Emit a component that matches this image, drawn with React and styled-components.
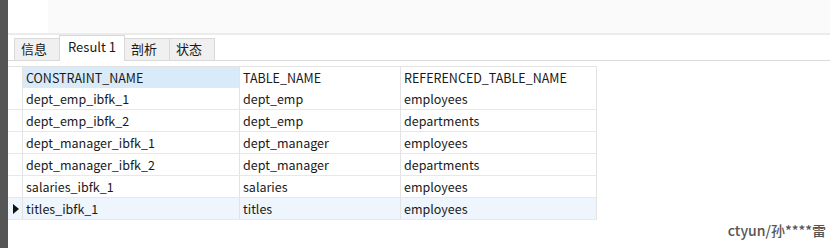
import React from 'react'
import styled, { createGlobalStyle } from 'styled-components'

const Global = createGlobalStyle`
  html, body { margin: 0; padding: 0; background: #fff; }
  body { font-family: "Noto Sans CJK SC", "Noto Sans", sans-serif; font-size: 12.5px; color: #1a1a1a; }
`

const columns = ['CONSTRAINT_NAME', 'TABLE_NAME', 'REFERENCED_TABLE_NAME']
const widths = [217, 161, 196]

const rows = [
  ['dept_emp_ibfk_1', 'dept_emp', 'employees'],
  ['dept_emp_ibfk_2', 'dept_emp', 'departments'],
  ['dept_manager_ibfk_1', 'dept_manager', 'employees'],
  ['dept_manager_ibfk_2', 'dept_manager', 'departments'],
  ['salaries_ibfk_1', 'salaries', 'employees'],
  ['titles_ibfk_1', 'titles', 'employees'],
]

const Page = styled.div`
  display: flex;
  width: 830px;
  height: 248px;
  overflow: hidden;
  position: relative;
`

const SideStrip = styled.div`
  width: 8px;
  background: #555;
  flex-shrink: 0;
`

const Main = styled.div`
  flex: 1;
  display: flex;
  flex-direction: column;
`

const TopArea = styled.div`
  height: 33px;
  display: flex;
  border-bottom: 2px solid #ebebeb;
`

const TopBlank = styled.div`
  width: 40px;
  background: #fff;
`

const TopFill = styled.div`
  flex: 1;
  background: #fafafa;
`

const TabBar = styled.div`
  height: 25px;
  display: flex;
  align-items: flex-end;
  padding-left: 6px;
  border-bottom: 1px solid #d9d9d9;
`

const Tab = styled.div`
  box-sizing: border-box;
  height: ${p => (p.$active ? 26 : 22)}px;
  min-width: ${p => (p.$active ? 61 : 46)}px;
  padding: 0 ${p => (p.$active ? 8 : 6)}px ${p => (p.$active ? 5 : 3)}px;
  margin-left: ${p => (p.$first ? 0 : -1)}px;
  margin-bottom: ${p => (p.$active ? '-1px' : '0')};
  display: flex;
  align-items: center;
  background: ${p => (p.$active ? '#fff' : '#f0f0f0')};
  border: 1px solid #d9d9d9;
  border-bottom: none;
  color: #1a1a1a;
  font-size: 13px;
  position: relative;
  z-index: ${p => (p.$active ? 1 : 0)};
`

const Grid = styled.div`
  margin-top: 5px;
  display: grid;
  grid-template-columns: 15px ${widths.map(w => w + 'px').join(' ')};
  grid-auto-rows: 22px;
  width: max-content;
`

const Cell = styled.div`
  box-sizing: border-box;
  padding-left: 3px;
  display: flex;
  align-items: center;
  white-space: nowrap;
  border-right: 1px solid #e3e3e3;
  border-bottom: 1px solid #e8e8e8;
  background: ${p => p.$bg || '#fff'};
`

const HeadCell = styled(Cell)`
  height: 23px;
  border-top: 1px solid #e3e3e3;
  border-bottom: 1px solid #dcdcdc;
`

const RowHead = styled(Cell)`
  padding-left: 2px;
  justify-content: center;
`

const Marker = styled.span`
  width: 0;
  height: 0;
  border-top: 5px solid transparent;
  border-bottom: 5px solid transparent;
  border-left: 6px solid #111;
`

const Watermark = styled.div`
  position: absolute;
  right: 4px;
  bottom: 8px;
  font-size: 14px;
  font-weight: 500;
  color: #555;
`

export default function App() {
  return (
    <Page>
      <Global />
      <SideStrip />
      <Main>
        <TopArea>
          <TopBlank />
          <TopFill />
        </TopArea>
        <TabBar>
          <Tab $first>信息</Tab>
          <Tab $active>Result 1</Tab>
          <Tab>剖析</Tab>
          <Tab>状态</Tab>
        </TabBar>
        <Grid>
          <HeadCell />
          {columns.map((c, i) => (
            <HeadCell key={c} $bg={i === 0 ? '#d9eaf8' : '#fff'}>{c}</HeadCell>
          ))}
          {rows.map((r, ri) => {
            const bg = ri === rows.length - 1 ? '#eef5fc' : '#fff'
            return (
              <React.Fragment key={ri}>
                <RowHead $bg={bg}>{ri === rows.length - 1 && <Marker />}</RowHead>
                {r.map((v, ci) => (
                  <Cell key={ci} $bg={bg}>{v}</Cell>
                ))}
              </React.Fragment>
            )
          })}
        </Grid>
      </Main>
      <Watermark>ctyun/孙****雷</Watermark>
    </Page>
  )
}
